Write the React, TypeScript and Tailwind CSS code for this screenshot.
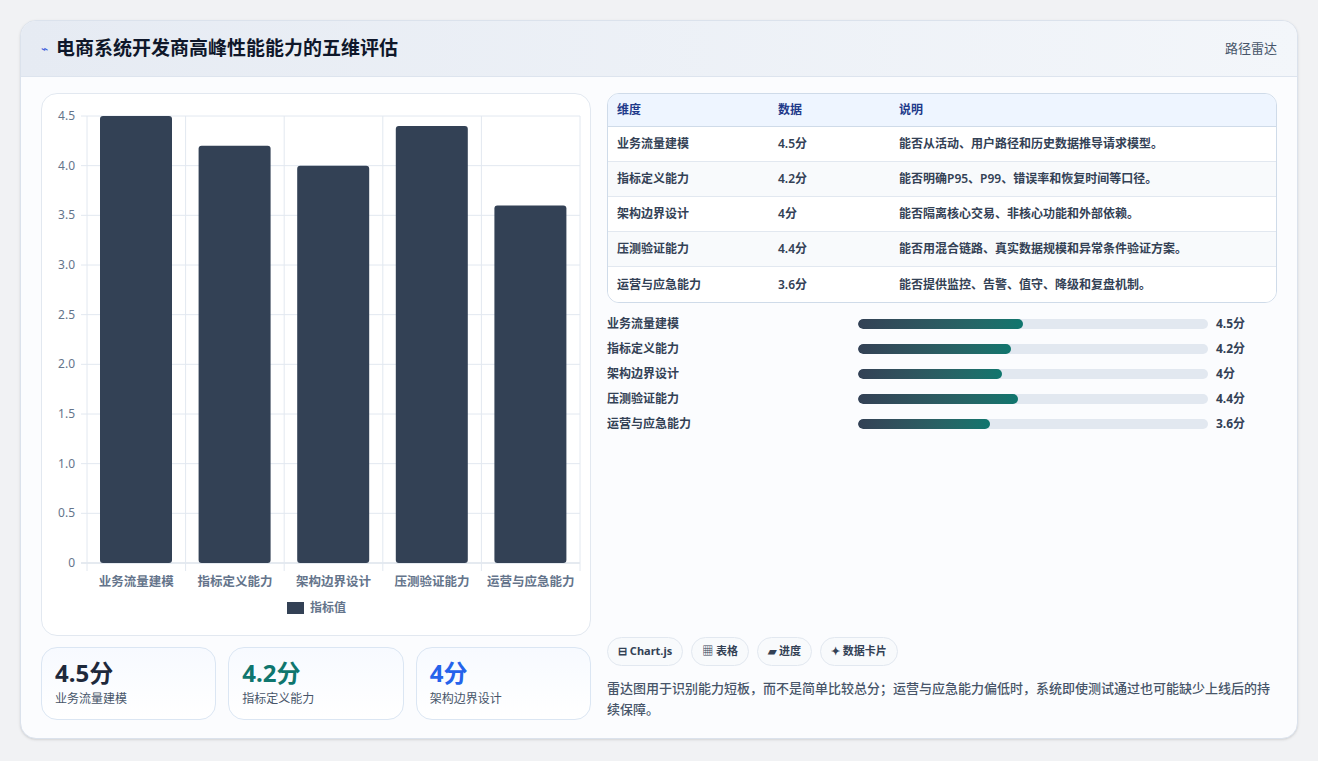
import React from "react";

const rows = [
  { name: "业务流量建模", v: 4.5, desc: "能否从活动、用户路径和历史数据推导请求模型。", pct: 47 },
  { name: "指标定义能力", v: 4.2, desc: "能否明确P95、P99、错误率和恢复时间等口径。", pct: 43.7 },
  { name: "架构边界设计", v: 4, desc: "能否隔离核心交易、非核心功能和外部依赖。", pct: 41 },
  { name: "压测验证能力", v: 4.4, desc: "能否用混合链路、真实数据规模和异常条件验证方案。", pct: 45.7 },
  { name: "运营与应急能力", v: 3.6, desc: "能否提供监控、告警、值守、降级和复盘机制。", pct: 37.7 },
];

const font = { fontFamily: '"Noto Sans", "Noto Sans CJK SC", sans-serif' };

function Chart() {
  const x0 = 45, x1 = 538, y0 = 469, yTop = 22;
  const step = (x1 - x0) / 5;
  const yOf = (v: number) => y0 - ((y0 - yTop) * v) / 4.5;
  const ticks = [0, 0.5, 1, 1.5, 2, 2.5, 3, 3.5, 4, 4.5];
  return (
    <svg width="550" height="541" viewBox="0 0 550 541" style={font}>
      {ticks.map((t) => (
        <g key={t}>
          <line x1={x0 - 6} x2={x1} y1={yOf(t)} y2={yOf(t)} stroke={t === 0 ? "#cbd5e1" : "#e2e8f0"} />
          <text x={x0 - 12} y={yOf(t) + 4} textAnchor="end" fontSize="12" fill="#64748b">
            {t === 0 ? "0" : t.toFixed(1)}
          </text>
        </g>
      ))}
      {[0, 1, 2, 3, 4, 5].map((i) => (
        <line key={i} x1={x0 + i * step} x2={x0 + i * step} y1={yTop} y2={y0 + 8} stroke="#e2e8f0" />
      ))}
      {rows.map((r, i) => (
        <g key={r.name}>
          <rect x={x0 + i * step + 13} y={yOf(r.v)} width={72} height={y0 - yOf(r.v)} rx="3" fill="#334155" />
          <text x={x0 + i * step + step / 2} y={492} textAnchor="middle" fontSize="12.5" fill="#64748b" fontWeight="600">
            {r.name}
          </text>
        </g>
      ))}
      <rect x={245} y={508} width={17} height={12} fill="#334155" />
      <text x={268} y={518} fontSize="12" fill="#64748b" fontWeight="600">指标值</text>
    </svg>
  );
}

export default function App() {
  return (
    <div className="min-h-screen bg-[#f1f2f4] pt-5 px-5" style={font}>
      <div className="w-[1278px] rounded-2xl border border-[#dbe2ec] bg-[#fbfcfe] shadow-sm overflow-hidden">
        <div className="h-[56px] flex items-center justify-between px-5 bg-gradient-to-r from-[#e6ebf3] to-[#f3f6fa] border-b border-[#dde4ee]">
          <div className="flex items-center gap-2">
            <span className="text-[#3b5bdb] text-xs">⌁</span>
            <h1 className="text-[19px] font-bold text-[#0f172a]">电商系统开发商高峰性能能力的五维评估</h1>
          </div>
          <span className="text-[13px] text-[#475569]">路径雷达</span>
        </div>
        <div className="flex gap-4 px-5 pt-4 pb-[18px]">
          <div className="w-[550px] flex flex-col gap-[11px]">
            <div className="rounded-2xl border border-[#e2e8f0] bg-white overflow-hidden">
              <Chart />
            </div>
            <div className="grid grid-cols-3 gap-3">
              {[
                ["4.5分", "text-[#1e293b]", "业务流量建模"],
                ["4.2分", "text-[#0f766e]", "指标定义能力"],
                ["4分", "text-[#2563eb]", "架构边界设计"],
              ].map(([v, c, l]) => (
                <div key={l} className="h-[73px] rounded-2xl border border-[#dbe6f3] bg-gradient-to-b from-[#f7faff] to-white px-[13px] pt-[10px]">
                  <div className={`text-[24px] font-bold leading-[30px] ${c}`}>{v}</div>
                  <div className="text-[12px] text-[#475569] mt-[2px]">{l}</div>
                </div>
              ))}
            </div>
          </div>
          <div className="flex-1 flex flex-col">
            <div className="rounded-xl border border-[#cfdbe9] overflow-hidden">
              <div className="flex h-[33px] items-center bg-[#eef5ff] border-b border-[#cfdbe9] text-[12px] font-semibold text-[#1e3a8a]">
                <span className="w-[170px] pl-[9px]">维度</span>
                <span className="w-[121px]">数据</span>
                <span>说明</span>
              </div>
              {rows.map((r, i) => (
                <div key={r.name} className={`flex h-[35px] items-center text-[12px] font-semibold text-[#334155] ${i % 2 ? "bg-[#f8fafc]" : "bg-white"} ${i < 4 ? "border-b border-[#e2e8f0]" : ""}`}>
                  <span className="w-[170px] pl-[9px]">{r.name}</span>
                  <span className="w-[121px]">{r.v}分</span>
                  <span>{r.desc}</span>
                </div>
              ))}
            </div>
            <div className="flex flex-col mt-[8px]">
              {rows.map((r) => (
                <div key={r.name} className="flex items-center h-[25px] text-[12px] font-semibold text-[#334155]">
                  <span className="w-[251px]">{r.name}</span>
                  <div className="w-[350px] h-[10px] rounded-full bg-[#e2e8f0] overflow-hidden">
                    <div className="h-full rounded-full bg-gradient-to-r from-[#334155] to-[#0f766e]" style={{ width: `${r.pct}%` }} />
                  </div>
                  <span className="ml-2 font-bold">{r.v}分</span>
                </div>
              ))}
            </div>
            <div className="mt-auto flex gap-2">
              {["⊟ Chart.js", "▦ 表格", "▰ 进度", "✦ 数据卡片"].map((t) => (
                <span key={t} className="h-[29px] px-[10px] flex items-center rounded-full border border-[#e2e8f0] bg-[#f8fafc] text-[11px] font-bold text-[#334155]">{t}</span>
              ))}
            </div>
            <p className="mt-[12px] text-[13px] leading-[21px] text-[#475569] font-medium">
              雷达图用于识别能力短板，而不是简单比较总分；运营与应急能力偏低时，系统即使测试通过也可能缺少上线后的持续保障。
            </p>
          </div>
        </div>
      </div>
    </div>
  );
}
